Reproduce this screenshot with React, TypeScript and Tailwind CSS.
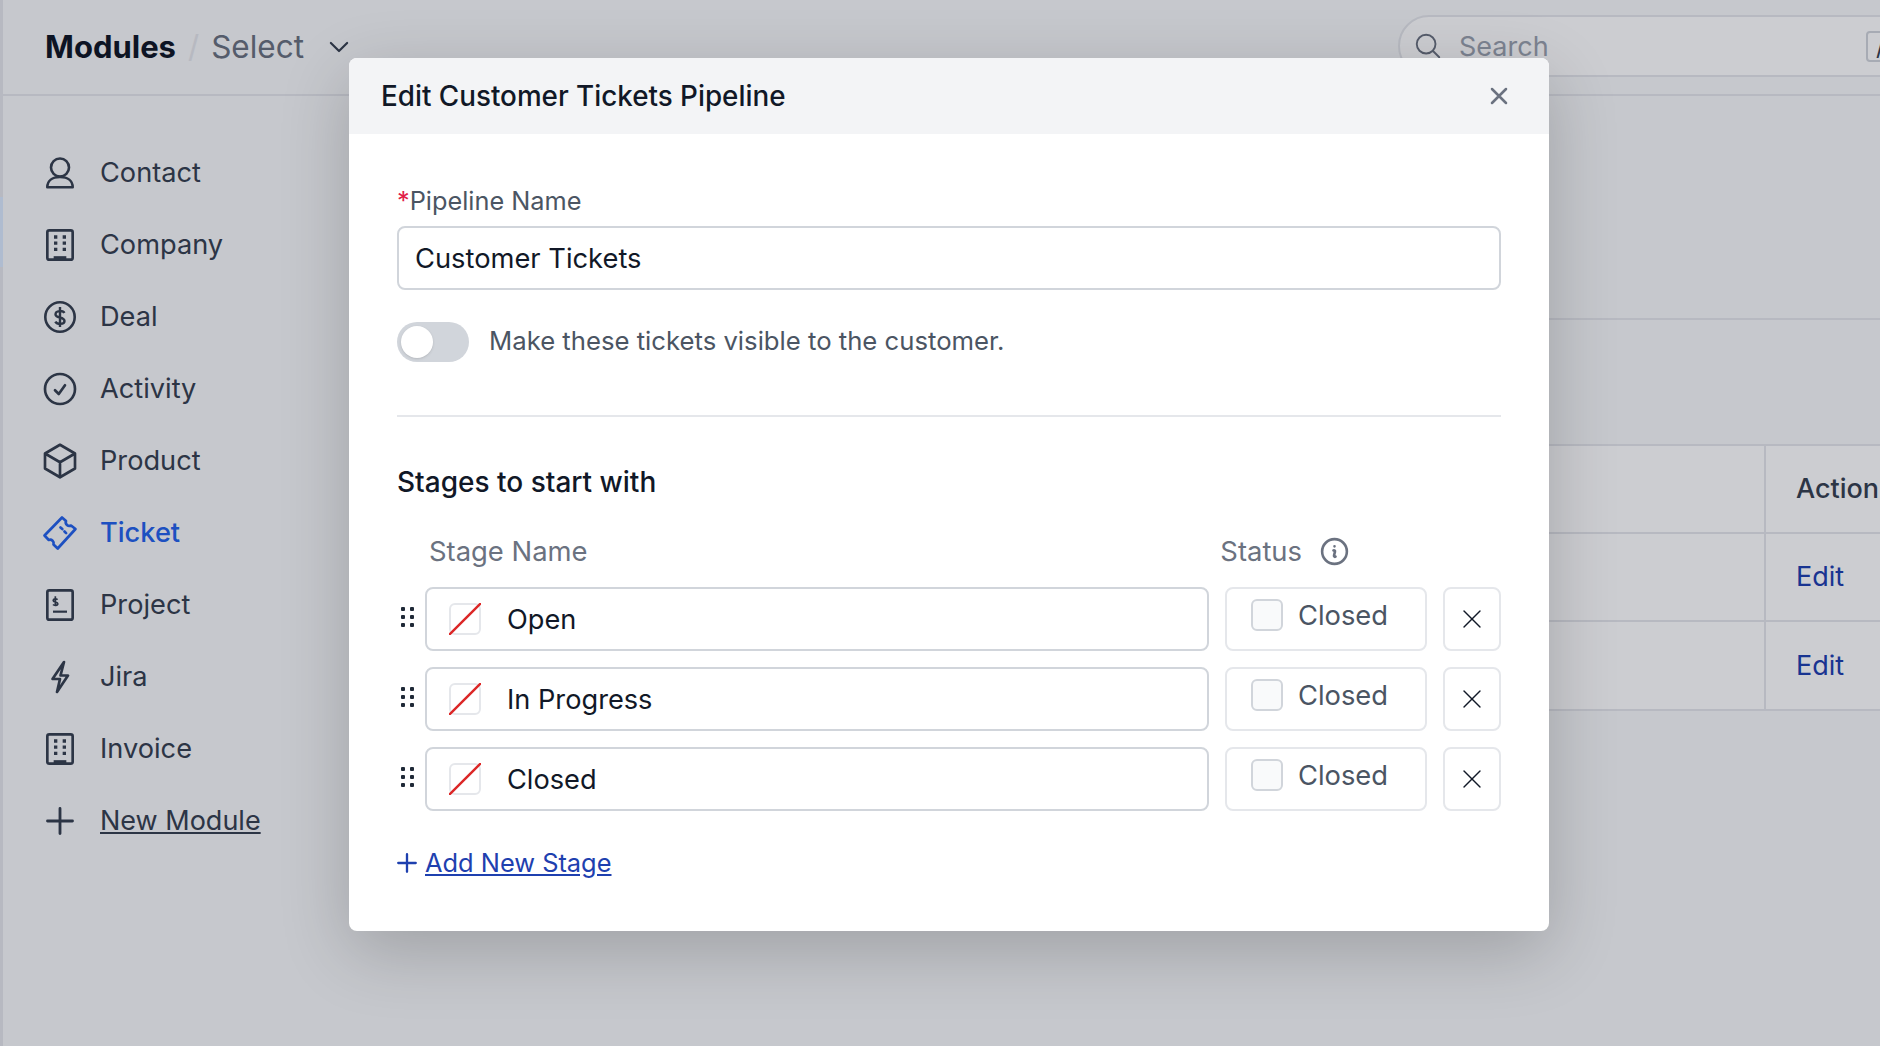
import {
  HiOutlineCheckCircle,
  HiOutlineCube,
  HiOutlinePlus,
  HiOutlineInformationCircle,
  HiOutlineMagnifyingGlass,
  HiOutlineChevronDown,
  HiOutlineXMark,
} from 'react-icons/hi2';
import { X } from 'lucide-react';

type IconProps = { className?: string; strokeWidth?: number };

const UserIcon = ({ className }: IconProps) => (
  <svg viewBox="0 0 40 40" fill="none" stroke="currentColor" strokeWidth={2.6} strokeLinejoin="round" className={className}>
    <circle cx="20" cy="14.5" r="9" />
    <path d="M7.3 34.3c0-6.4 5-10.3 12.7-10.3s12.7 3.9 12.7 10.3z" />
  </svg>
);

const BuildingIcon = ({ className }: IconProps) => (
  <svg viewBox="0 0 24 24" fill="none" stroke="currentColor" strokeWidth={1.6} className={className}>
    <rect x="4.4" y="3.2" width="15.2" height="17.6" rx="1.2" />
    <path d="M8.2 19.8h7.6" strokeWidth={2.2} />
    <path d="M8.4 7.2h2M13.6 7.2h2M8.4 10.9h2M13.6 10.9h2M8.4 14.6h2M13.6 14.6h2" strokeWidth={2} />
  </svg>
);

const ProjectIcon = ({ className }: IconProps) => (
  <svg viewBox="0 0 24 24" fill="none" stroke="currentColor" strokeWidth={1.6} className={className}>
    <rect x="4.4" y="3.2" width="15.2" height="17.6" rx="1.2" />
    <path d="M7.8 16h8.4" strokeWidth={1.3} />
    <path d="M10.5 8.8c-.5-.7-2.6-.8-2.6.5 0 1.2 2.8.7 2.8 2 0 1.2-2.3 1.1-2.9.4M9.2 6.8v6" strokeWidth={1} />
  </svg>
);

const DollarIcon = ({ className }: IconProps) => (
  <svg viewBox="0 0 40 40" fill="none" stroke="currentColor" strokeWidth={2.6} className={className}>
    <circle cx="20" cy="20" r="14.7" />
    <path d="M24.3 16c-1-2.6-8.8-3-8.8 1.4 0 4 9 2.2 9 6.6 0 4-7.6 3.4-9.2.6M20 10v20" strokeWidth={2.4} />
  </svg>
);

const BoltIcon = ({ className }: IconProps) => (
  <svg viewBox="0 0 40 40" fill="none" stroke="currentColor" strokeWidth={2.7} strokeLinejoin="round" strokeLinecap="round" className={className}>
    <path d="M24 5 12.5 22H20l-3 13 11-16.5h-7.5z" />
  </svg>
);

const TicketIcon = ({ className }: IconProps) => (
  <svg viewBox="0 0 40 40" fill="none" stroke="currentColor" strokeWidth={2.7} strokeLinejoin="round" strokeLinecap="round" className={className}>
    <path d="M22 4.5 26 8A3.6 3.6 0 0 0 31 12.5L35.5 16 17.7 35.5 13.5 31.5A3.6 3.6 0 0 0 8.8 27L4.5 22.5z" />
    <path d="M20.5 14.5l1.8 1.6M24.5 18.5l1.6 1.6" />
  </svg>
);

const DragDots = () => (
  <div className="grid grid-cols-2 gap-x-[5px] gap-y-[4px] w-[13px] ml-1">
    {[0, 1, 2, 3, 4, 5].map((i) => (
      <span key={i} className="w-1 h-1 rounded-[1px] bg-[#1f2937]" />
    ))}
  </div>
);

const navItems = [
  { label: 'Contact', icon: UserIcon },
  { label: 'Company', icon: BuildingIcon },
  { label: 'Deal', icon: DollarIcon },
  { label: 'Activity', icon: HiOutlineCheckCircle },
  { label: 'Product', icon: HiOutlineCube },
  { label: 'Ticket', icon: TicketIcon, active: true },
  { label: 'Project', icon: ProjectIcon },
  { label: 'Jira', icon: BoltIcon },
  { label: 'Invoice', icon: BuildingIcon },
];

const stages = ['Open', 'In Progress', 'Closed'];

const StageRow = ({ name }: { name: string }) => (
  <div className="flex items-center h-[64px]">
    <div className="w-7 shrink-0 -mt-1">
      <DragDots />
    </div>
    <div className="flex-1 h-full flex items-center rounded-lg border-2 border-[#d1d5db] pl-[22px]">
      <svg viewBox="0 0 32 32" className="w-8 h-8 shrink-0">
        <rect x="1" y="1" width="30" height="30" rx="5" fill="#fff" stroke="#e5e7eb" strokeWidth="2" />
        <path d="M0 32 L32 0" stroke="#dc2626" strokeWidth="2.4" />
      </svg>
      <span className="ml-[26px] pt-[2px] text-[27.2px] text-[#111827]">{name}</span>
    </div>
    <div className="ml-4 w-[202px] h-full flex items-start pt-[10px] rounded-lg border-2 border-[#e5e7eb] pl-[24px]">
      <span className="w-8 h-8 rounded-md border-2 border-[#d1d5db] bg-[#f9fafb]" />
      <span className="ml-[15px] mt-[1px] text-[27.3px] leading-8 text-[#4b5563]">Closed</span>
    </div>
    <div className="ml-4 w-[58px] h-full flex items-center justify-center rounded-lg border-2 border-[#e5e7eb]">
      <X size={32} strokeWidth={1} className="text-[#111827]" />
    </div>
  </div>
);

const App = () => {
  return (
    <div className="relative w-[1880px] h-[1046px] overflow-hidden bg-white font-['Inter',sans-serif]">
      {/* page behind the dialog */}
      <div className="h-full bg-[#f8f9fa] border-l-[3px] border-[#e5e7eb] flex flex-col">
        <header className="h-[96px] shrink-0 flex items-center border-b-2 border-[#e5e7eb] pl-[42px]">
          <span className="text-[31px] font-bold text-[#111827]">Modules</span>
          <span className="ml-3 text-[31px] text-[#e5e7eb]">/</span>
          <span className="ml-3 text-[31.5px] text-[#6b7280]">Select</span>
          <HiOutlineChevronDown className="ml-[22px] w-[26px] h-[26px] text-[#374151]" strokeWidth={2} />
          <div className="ml-auto w-[520px] -mr-[38px] h-[62px] -mt-[2px] flex items-center rounded-l-full border-2 border-[#e5e7eb] bg-white pl-[13px]">
            <HiOutlineMagnifyingGlass className="w-[30px] h-[30px] text-[#6b7280]" />
            <span className="ml-4 mt-[3px] text-[27px] text-[#9ca3af]">Search</span>
            <span className="ml-auto mr-[10px] w-[40px] h-[31px] rounded border-2 border-[#d1d5db] text-[#374151] pl-2 text-[24px] leading-[27px]">/</span>
          </div>
        </header>
        <div className="flex-1 flex">
          <nav className="w-[380px] shrink-0 pt-[41px] pl-[37px]">
            {navItems.map((item) => {
              const Icon = item.icon;
              return (
                <div
                  key={item.label}
                  className={`h-[72px] flex items-center gap-5 ${item.active ? 'text-[#2563eb] font-medium' : 'text-[#374151]'}`}
                >
                  <Icon className="w-10 h-10" strokeWidth={1.6} />
                  <span className="text-[27.2px]">{item.label}</span>
                </div>
              );
            })}
            <div className="h-[72px] flex items-center gap-5 text-[#374151]">
              <HiOutlinePlus className="w-10 h-10" strokeWidth={1.7} />
              <span className="text-[27px] underline">New Module</span>
            </div>
          </nav>
          <main className="flex-1">
            <div className="h-[224px] border-b-2 border-[#e5e7eb]" />
            <div className="mt-[124px] border-y-2 border-[#e5e7eb]">
              <div className="h-[88px] flex bg-white border-b-2 border-[#e5e7eb]">
                <div className="flex-1" />
                <div className="w-[116px] flex items-center border-l-2 border-[#e5e7eb] pl-[30px] text-[27px] font-medium text-[#374151] whitespace-nowrap">Action</div>
              </div>
              <div className="h-[88px] flex bg-white border-b-2 border-[#e5e7eb]">
                <div className="flex-1" />
                <div className="w-[116px] flex items-center border-l-2 border-[#e5e7eb] pl-[30px] pt-[1px] text-[27px] text-[#1e40af]">Edit</div>
              </div>
              <div className="h-[87px] flex bg-white">
                <div className="flex-1" />
                <div className="w-[116px] flex items-center border-l-2 border-[#e5e7eb] pl-[30px] pt-[2px] text-[27px] text-[#1e40af]">Edit</div>
              </div>
            </div>
          </main>
        </div>
      </div>
      <span className="absolute left-0 top-[197px] w-[3px] h-[70px] bg-[#dbeafe]" />

      {/* overlay */}
      <div className="absolute inset-0 bg-[#00051a]/20" />

      {/* dialog */}
      <div className="absolute left-[349px] top-[58px] w-[1200px] h-[873px] rounded-lg bg-white shadow-[0_20px_70px_rgba(0,0,0,0.2)] overflow-hidden">
        <div className="h-[76px] flex items-center justify-between bg-[#f3f4f6] pl-8 pr-[36px]">
          <h2 className="pt-[2px] text-[27.8px] font-medium text-[#111827]">Edit Customer Tickets Pipeline</h2>
          <HiOutlineXMark className="w-7 h-7 text-[#6b7280]" strokeWidth={2.2} />
        </div>
        <div className="px-12 pt-[47px]">
          <label className="block h-[40px] mb-[5px] leading-[40px] text-[25.3px] text-[#4b5563]">
            <span className="text-[#e11d48]">*</span>Pipeline Name
          </label>
          <div className="h-[64px] flex items-center rounded-lg border-2 border-[#d1d5db] pl-[16px] pt-[3px] text-[27.3px] text-[#111827]">Customer Tickets</div>
          <div className="mt-8 flex items-center gap-5">
            <div className="w-[72px] h-10 rounded-full bg-[#d1d5db] p-1">
              <div className="w-8 h-8 rounded-full bg-white shadow" />
            </div>
            <span className="-mt-[1px] text-[25.7px] text-[#4b5563]">Make these tickets visible to the customer.</span>
          </div>
          <div className="mt-[53px] h-[2px] bg-[#e5e7eb]" />
          <h3 className="mt-[45px] h-10 leading-10 text-[28px] font-medium text-[#111827]">Stages to start with</h3>
          <div className="mt-[29px] h-10 flex items-center leading-10 text-[27.4px] text-[#6b7280]">
            <span className="ml-8">Stage Name</span>
            <span className="ml-auto">Status</span>
            <HiOutlineInformationCircle className="ml-4 w-[33px] h-[33px] mr-[150px]" strokeWidth={1.9} />
          </div>
          <div className="mt-4 flex flex-col gap-4">
            {stages.map((s) => (
              <StageRow key={s} name={s} />
            ))}
          </div>
          <div className="mt-[33px] flex items-center text-[25.4px] text-[#1e40af]">
            <HiOutlinePlus className="w-7 h-7 -ml-[4px]" strokeWidth={2} />
            <span className="ml-[4px] underline">Add New Stage</span>
          </div>
        </div>
      </div>
    </div>
  );
};

export default App;
